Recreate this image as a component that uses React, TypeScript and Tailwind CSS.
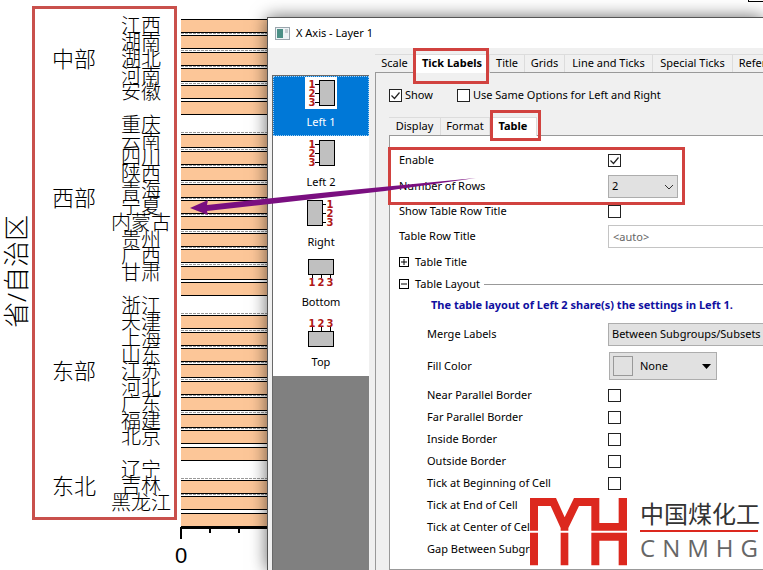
import type { ReactNode } from "react";

const GROUPS = [
  { name: "中部", provinces: ["江西", "湖南", "湖北", "河南", "安徽"] },
  { name: "西部", provinces: ["重庆", "云南", "四川", "陕西", "青海", "宁夏", "内蒙古", "贵州", "广西", "甘肃"] },
  { name: "东部", provinces: ["浙江", "天津", "上海", "山东", "江苏", "河北", "广东", "福建", "北京"] },
  { name: "东北", provinces: ["辽宁", "吉林", "黑龙江"] },
];

// bars per group, one empty slot between groups
const BAR_COUNTS = [6, 10, 9, 3];
const SLOT = 16.45;

type Side = "left" | "right" | "bottom" | "top";

const AXES: { label: string; side: Side }[] = [
  { label: "Left 1", side: "left" },
  { label: "Left 2", side: "left" },
  { label: "Right", side: "right" },
  { label: "Bottom", side: "bottom" },
  { label: "Top", side: "top" },
];

const TABS = [
  { label: "Scale", width: "w-[40px]" },
  { label: "Tick Labels", width: "w-[75px]" },
  { label: "Title", width: "w-[35px]" },
  { label: "Grids", width: "w-[40px]" },
  { label: "Line and Ticks", width: "w-[88px]" },
  { label: "Special Ticks", width: "w-[80px]" },
  { label: "Reference Lines", width: "w-[94px]" },
];

const SUB_TABS = [
  { label: "Display", width: "w-[52px]" },
  { label: "Format", width: "w-[49px]" },
  { label: "Table", width: "w-[47px]" },
];

const LAYOUT_CHECKS = [
  "Near Parallel Border",
  "Far Parallel Border",
  "Inside Border",
  "Outside Border",
  "Tick at Beginning of Cell",
  "Tick at End of Cell",
  "Tick at Center of Cell",
];

function ProvinceTable() {
  return (
    <div className="mt-[6px] h-[514px] w-[145px] shrink-0 border-3 border-[#c9504c] pt-[9px] pb-[6px]">
      <div className="grid h-full grid-cols-[73px_66px] grid-rows-[5fr_1fr_10fr_1fr_9fr_1fr_3fr] font-light text-black">
        {GROUPS.map((g, i) => (
          <div key={g.name} className="contents">
            {i > 0 && <div className="col-span-2" />}
            <div className="flex min-h-0 items-center justify-center pb-[3px] pl-[5px] text-[22px] leading-[22px]">{g.name}</div>
            <div className="flex min-h-0 flex-col text-[20px]">
              {g.provinces.map((p) => (
                <div key={p} className="flex min-h-0 flex-1 items-center justify-center leading-[16px] whitespace-nowrap">
                  <span className="shrink-0">{p}</span>
                </div>
              ))}
            </div>
          </div>
        ))}
      </div>
    </div>
  );
}

function BarChart() {
  const bars: { y: number; dashed: boolean }[] = [];
  let slot = 0;
  BAR_COUNTS.forEach((n) => {
    for (let i = 0; i < n; i++) {
      bars.push({ y: Math.round(19 + slot * SLOT), dashed: slot > 0 && i < n - 1 });
      slot++;
    }
    slot++;
  });
  return (
    <svg width="90" height="570" viewBox="177 0 90 570" className="shrink-0 overflow-visible" shapeRendering="crispEdges">
      {bars.map((b) => (
        <g key={b.y}>
          {b.dashed && <path d={`M181 ${b.y - 1.5}H267`} stroke="#999" strokeDasharray="3 1" />}
          <rect x="181" y={b.y} width="86" height="14" fill="#fcc698" />
          <path d={`M181 ${b.y + 0.5}H267M181 ${b.y + 13.5}H267`} stroke="#000" />
        </g>
      ))}
      <path d="M180 528H267M181 527V539M210 527V533M239 527V533" stroke="#000" strokeWidth="2" />
      <text x="181" y="563" fontSize="22" textAnchor="middle" className="font-['Liberation_Sans',sans-serif]">0</text>
    </svg>
  );
}

function AxisIcon({ side }: { side: Side }) {
  const vertical = side === "left" || side === "right";
  const rect = { left: [14, 3], right: [2, 3], bottom: [3, 2], top: [3, 14] }[side];
  const tick = { left: 10, right: 17, bottom: 17, top: 10 }[side];
  const digit = { left: 7, right: 25, bottom: 29, top: 10 }[side];
  return (
    <svg width="32" height="32" viewBox="0 0 32 32" className="bg-white">
      <rect x={rect[0] + 0.5} y={rect[1] + 0.5} width={vertical ? 15 : 25} height={vertical ? 25 : 15} fill="#c0c0c0" stroke="#000" />
      {[7, 16, 25].map((s, i) => (
        <g key={s}>
          <path d={vertical ? `M${tick} ${s + 0.5}h4` : `M${s + 0.5} ${tick}v4`} stroke="#000" />
          <text
            x={vertical ? digit : s}
            y={vertical ? s + 4 : digit}
            textAnchor="middle"
            fontSize="10"
            fontWeight="bold"
            fill="#b01818"
            className="font-['DejaVu_Sans',sans-serif]"
          >
            {i + 1}
          </text>
        </g>
      ))}
    </svg>
  );
}

function AxisList() {
  return (
    <div className="mt-[27px] flex w-[97px] shrink-0 flex-col border-t border-l border-[#696969] bg-[#808080]">
      {AXES.map((a, i) => (
        <button
          key={a.label}
          className={`flex h-[60px] shrink-0 flex-col items-center pt-px ${
            i === 0 ? "bg-[#0078d7] text-white outline outline-dotted -outline-offset-1 outline-[#9fd0f5]" : "bg-white"
          }`}
        >
          <AxisIcon side={a.side} />
          <span className="mt-[5px] leading-[16px]">{a.label}</span>
        </button>
      ))}
    </div>
  );
}

function Check({ id, checked }: { id: string; checked?: boolean }) {
  return (
    <span className="relative flex size-[13px] shrink-0">
      <input id={id} type="checkbox" defaultChecked={checked} className="peer size-[13px] appearance-none border border-[#222] bg-white" />
      <svg viewBox="0 0 13 13" className="pointer-events-none absolute inset-0 hidden peer-checked:block">
        <path d="M2.5 6.5l3 3 5-6" fill="none" stroke="#222" strokeWidth="1.2" />
      </svg>
    </span>
  );
}

function Row({ id, label, height, sub, children }: { id: string; label: string; height: string; sub?: boolean; children?: ReactNode }) {
  return (
    <div className={`grid grid-cols-[218px_1fr] items-center ${height}`}>
      <label htmlFor={id} className={sub ? "pl-[37px]" : "pl-[9px]"}>{label}</label>
      {children}
    </div>
  );
}

function Expander({ open }: { open?: boolean }) {
  return (
    <svg width="10" height="10" viewBox="0 0 10 10">
      <rect x="0.5" y="0.5" width="9" height="9" fill="#fff" stroke="#000" />
      <path d={open ? "M2 5h6" : "M2 5h6M5 2v6"} stroke="#000" />
    </svg>
  );
}

function TablePanel() {
  return (
    <div className="relative flex-1 border border-r-0 border-[#999] bg-white pt-[11px]">
      <Row id="enable" label="Enable" height="h-[26px]"><Check id="enable" checked /></Row>
      <Row id="rows" label="Number of Rows" height="h-[26px]">
        <span className="relative w-[70px]">
          <select id="rows" defaultValue="2" className="block h-[23px] w-full appearance-none border border-[#adadad] bg-[#e1e1e1] pl-[3px]">
            <option>1</option>
            <option>2</option>
            <option>3</option>
          </select>
          <svg width="10" height="6" viewBox="0 0 10 6" className="pointer-events-none absolute top-[9px] right-[4px]">
            <path d="M1 1l4 4 4-4" fill="none" stroke="#333" />
          </svg>
        </span>
      </Row>
      <Row id="show-title" label="Show Table Row Title" height="h-[24px]"><Check id="show-title" /></Row>
      <Row id="row-title" label="Table Row Title" height="h-[27px]">
        <input id="row-title" type="text" placeholder="<auto>" className="h-[23px] w-full border border-r-0 border-[#c4c4c4] bg-white pl-[4px] placeholder:text-[#666]" />
      </Row>
      <button className="flex h-[24px] items-center gap-[6px] pl-[9px]"><Expander />Table Title</button>
      <div className="flex h-[20px] items-center gap-[4px] pl-[9px]">
        <button className="flex items-center gap-[6px]"><Expander open />Table Layout</button>
        <div className="h-px flex-1 bg-[#999]" />
      </div>
      <p className="flex h-[22px] items-center pl-[41px] font-bold text-[#1010a0]">
        The table layout of Left 2 share(s) the settings in Left 1.
      </p>
      <Row id="merge" label="Merge Labels" height="h-[36px]" sub>
        <select id="merge" className="h-[23px] w-full appearance-none border border-r-0 border-[#adadad] bg-[#e1e1e1] pl-[3px]">
          <option>Between Subgroups/Subsets</option>
        </select>
      </Row>
      <Row id="fill" label="Fill Color" height="h-[28px]" sub>
        <span className="relative ml-px w-[108px]">
          <select id="fill" className="block h-[28px] w-full appearance-none border border-[#adadad] bg-[#e1e1e1] pl-[30px]">
            <option>None</option>
          </select>
          <span className="pointer-events-none absolute top-[4px] left-[4px] size-[20px] border border-[#999]" />
          <svg width="9" height="5" viewBox="0 0 9 5" className="pointer-events-none absolute top-[12px] right-[6px]">
            <path d="M0 0h9L4.500 5z" />
          </svg>
        </span>
      </Row>
      <div className="pt-[4px] pb-[8px]">
        {LAYOUT_CHECKS.map((label, i) => (
          <Row key={label} id={`layout-${i}`} label={label} height="h-[22px]" sub><Check id={`layout-${i}`} /></Row>
        ))}
        <Row id="gap" label="Gap Between Subgroups" height="h-[22px]" sub>
          <input id="gap" type="text" className="h-[20px] w-[70px] border border-[#c4c4c4]" />
        </Row>
      </div>
      <div className="pointer-events-none absolute top-[11px] -left-[2px] h-[58px] w-[297px] border-3 border-[#d1423f]" />
    </div>
  );
}

function TabBar({ tabs, active, mark }: { tabs: { label: string; width: string }[]; active: string; mark: string }) {
  return (
    <div className="flex h-[18px] shrink-0">
      {tabs.map((t) => (
        <button
          key={t.label}
          className={`relative flex shrink-0 justify-center border-t border-r border-[#dcdcdc] leading-[16px] whitespace-nowrap ${t.width} ${
            t.label === active ? "z-10 -mb-px bg-white font-bold" : ""
          }`}
        >
          {t.label}
          {t.label === active && <span className={`pointer-events-none absolute border-3 border-[#d1423f] ${mark}`} />}
        </button>
      ))}
    </div>
  );
}

function Dialog() {
  return (
    <main className="relative mt-[17px] flex min-w-0 flex-1 flex-col border-t border-l border-[#555] bg-[#f0f0f0] shadow-[0_0_16px_rgba(0,0,0,0.6)]">
      <header className="flex h-[30px] shrink-0 items-center gap-[6px] bg-white pl-[7px]">
        <svg width="15" height="13" viewBox="0 0 15 13">
          <rect x="0.5" y="0.5" width="14" height="12" fill="#eef3f6" stroke="#9aa5ad" />
          <rect x="2" y="2" width="6" height="9" fill="#4b8f86" />
          <path d="M10 3h3M10 5h3" stroke="#9aa5ad" />
        </svg>
        <h1>X Axis - Layer 1</h1>
      </header>
      <div className="flex min-h-0 flex-1 pl-[4px]">
        <AxisList />
        <div className="flex min-w-0 flex-1 flex-col pt-[6px] pl-[6px]">
          <TabBar tabs={TABS} active="Tick Labels" mark="-top-[7px] -left-[2px] h-[36px] w-[76px]" />
          <div className="flex flex-1 flex-col border-t border-l border-[#999] pl-[13px]">
            <div className="flex h-[44px] shrink-0 items-center gap-[24px]">
              <span className="flex items-center gap-[3px]">
                <Check id="show" checked />
                <label htmlFor="show">Show</label>
              </span>
              <span className="flex items-center gap-[3px]">
                <Check id="same" />
                <label htmlFor="same">Use Same Options for Left and Right</label>
              </span>
            </div>
            <TabBar tabs={SUB_TABS} active="Table" mark="-top-[8px] left-0 h-[31px] w-[51px]" />
            <TablePanel />
          </div>
        </div>
      </div>
    </main>
  );
}

function Logo() {
  return (
    <div className="absolute right-0 bottom-[2px] z-20 flex items-start gap-[13px] bg-white pr-[5px] pb-[2px]">
      <svg width="97" height="68" viewBox="0 0 291 204" fill="#dc281e">
        <path d="M0 0H78L104 58L132 0H208V75H266V0H291V98H184V24H147L115 90V98H92V90L62 24H24V98H0Z" />
        <path d="M0 104H24V202H0ZM92 104H115V202H92ZM184 104H291V202H266V128H208V202H184Z" />
      </svg>
      <div className="w-[118px]">
        <div className="text-[24px] leading-[32px] whitespace-nowrap text-[#333]">中国煤化工</div>
        <div className="h-[2px] bg-[#dc281e]" />
        <div className="flex justify-between font-['Open_Sans',sans-serif] text-[24px] leading-[32px] text-[#666]">
          {["C", "N", "M", "H", "G"].map((c) => <span key={c}>{c}</span>)}
        </div>
      </div>
    </div>
  );
}

export default function App() {
  return (
    <div className="relative flex h-screen overflow-hidden bg-white font-['Noto_Sans','Noto_Sans_CJK_SC',sans-serif] text-[11px] text-black">
      <section className="flex w-[267px] shrink-0">
        <div className="flex w-[32px] shrink-0 items-start justify-center pt-[215px]">
          <h2 className="rotate-180 text-[26px] leading-[32px] font-light whitespace-nowrap [text-orientation:sideways] [writing-mode:vertical-rl]">
            省/自治区
          </h2>
        </div>
        <ProvinceTable />
        <BarChart />
      </section>
      <Dialog />
      <div className="absolute top-0 right-0 h-[2px] w-[15px] border-b border-l border-black" />
      <svg width="290" height="42" viewBox="190 176 290 42" className="pointer-events-none absolute top-[176px] left-[190px] z-20">
        <path d="M190 208L208 200L207 205L330 192L476 178L385 191L207 211L208 215Z" fill="#7a0f80" />
      </svg>
      <Logo />
    </div>
  );
}
